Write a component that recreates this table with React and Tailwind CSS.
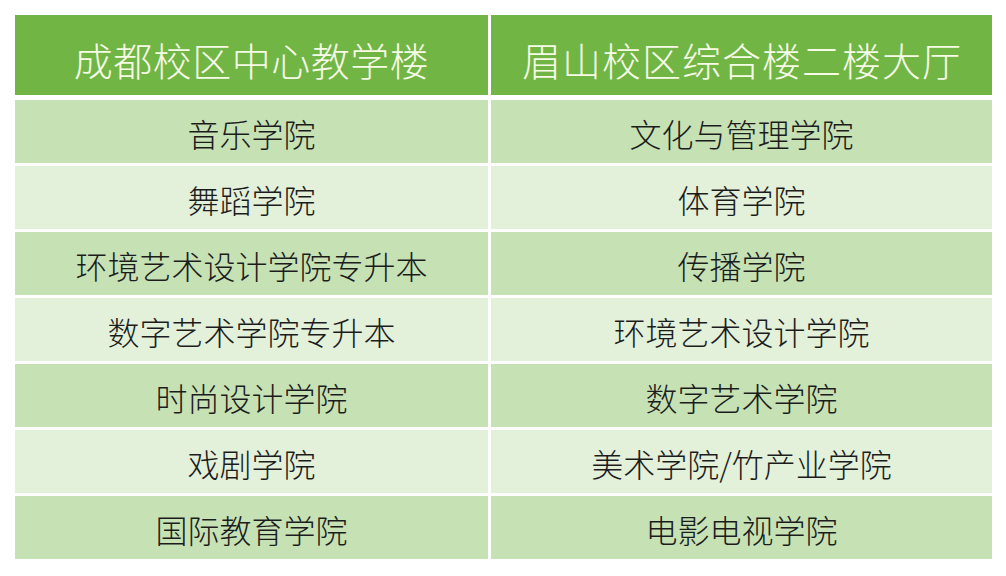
const rows = [
  ["音乐学院", "文化与管理学院"],
  ["舞蹈学院", "体育学院"],
  ["环境艺术设计学院专升本", "传播学院"],
  ["数字艺术学院专升本", "环境艺术设计学院"],
  ["时尚设计学院", "数字艺术学院"],
  ["戏剧学院", "美术学院/竹产业学院"],
  ["国际教育学院", "电影电视学院"],
];

const font = { fontFamily: '"Noto Sans CJK SC", sans-serif' };

export default function App() {
  return (
    <div className="w-[1006px] h-[576px] bg-white pt-[15px] pl-[15px]" style={font}>
      <div className="flex flex-col w-[977px]">
        {/* header */}
        <div className="grid grid-cols-[473px_501px] gap-x-[3px] mb-[5px]">
          <div className="h-[80px] bg-[#71b545] flex items-center justify-center pt-[9px] text-[39px] font-light text-[#f6fbe6] tracking-[0.5px]">
            成都校区中心教学楼
          </div>
          <div className="h-[80px] bg-[#71b545] flex items-center justify-center pt-[9px] text-[39px] font-light text-[#f6fbe6] tracking-[1px] pl-[1px]">
            眉山校区综合楼二楼大厅
          </div>
        </div>

        {/* body */}
        <div className="flex flex-col gap-y-[3px]">
          {rows.map(([left, right], i) => (
            <div key={i} className="grid grid-cols-[473px_501px] gap-x-[3px]">
              {[left, right].map((txt, j) => (
                <div
                  key={j}
                  className={
                    "h-[63px] flex items-center justify-center pt-[3px] text-[32px] font-light text-[#1c1c1c] " +
                    (i % 2 === 0 ? "bg-[#c6e2b5]" : "bg-[#e3f0da]")
                  }
                >
                  {txt}
                </div>
              ))}
            </div>
          ))}
        </div>
      </div>
    </div>
  );
}
